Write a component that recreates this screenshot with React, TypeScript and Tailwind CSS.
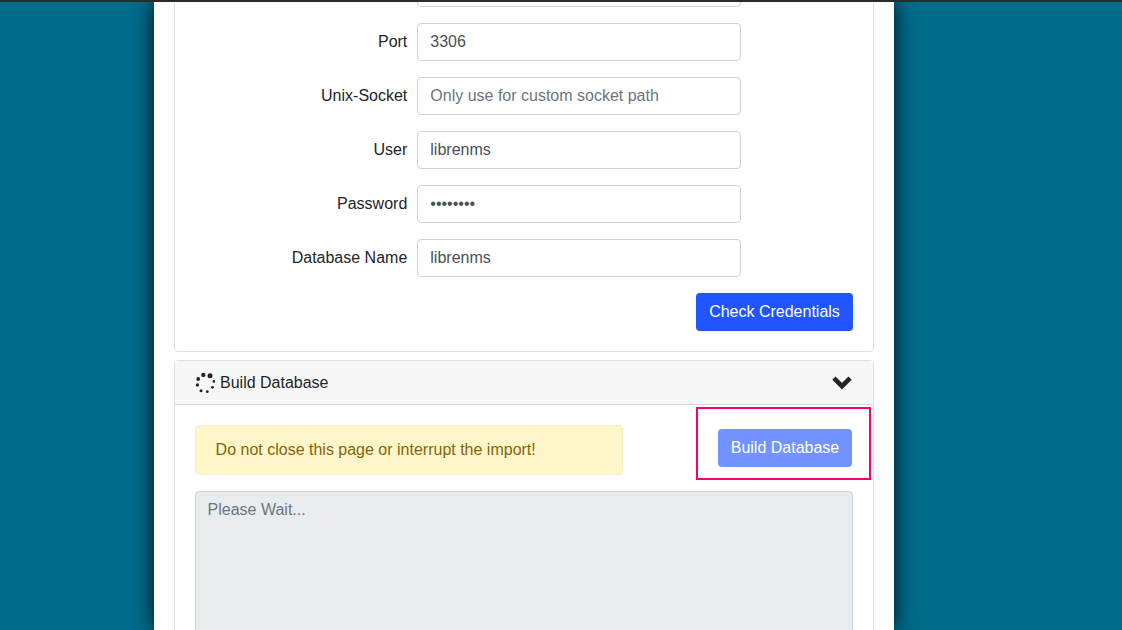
import React from 'react';

const fields = [
  { label: '', value: '' },
  { label: 'Port', value: '3306' },
  { label: 'Unix-Socket', placeholder: 'Only use for custom socket path' },
  { label: 'User', value: 'librenms' },
  { label: 'Password', value: '••••••••', type: 'password' },
  { label: 'Database Name', value: 'librenms' },
];

function Spinner() {
  // fa-spinner style ring of dots, largest at the top right
  const dots = [
    [15, 3.7, 2.5], [8.3, 2.9, 2.2], [3.2, 7, 1.9], [2.4, 13, 1.7],
    [6, 18.7, 1.5], [12.3, 19.7, 1.4], [17.5, 15.3, 1.4], [19, 9.4, 1.4],
  ];
  return (
    <svg width="20" height="22" viewBox="0 0 20 22" className="shrink-0 text-[#212529]">
      {dots.map(([cx, cy, r], i) => (
        <circle key={i} cx={cx} cy={cy} r={r} fill="currentColor" />
      ))}
    </svg>
  );
}

function Chevron() {
  return (
    <svg width="20" height="14" viewBox="0 0 20 14" className="text-[#212529]">
      <polyline points="1.9,2.2 10,10.2 18.1,2.2" fill="none" stroke="currentColor" strokeWidth="4.6" />
    </svg>
  );
}

export default function App() {
  return (
    <div className="h-[630px] overflow-hidden border-t-2 border-[#2b2b2b] bg-[#006c8b] font-['Liberation_Sans',Arial,sans-serif] text-base text-[#212529]">
      <div className="ml-[154px] h-full w-[740px] overflow-hidden bg-white px-5 shadow-[0_0_20px_rgba(0,0,0,0.9)]">
        {/* Database credentials card, scrolled past its top */}
        <div className="-mt-[85px] flex h-[435px] flex-col justify-end rounded border border-[rgba(0,0,0,0.125)] p-5">
          <div className="flex flex-col gap-4">
            {fields.map((f, i) => (
              <div key={i} className="flex items-center">
                <label className="w-[222.3px] pr-[10px] text-right">{f.label}</label>
                <input
                  readOnly
                  type={f.type ?? 'text'}
                  value={f.value ?? ''}
                  placeholder={f.placeholder}
                  className="h-[38px] w-[324px] rounded border border-[#ced4da] bg-white px-3 text-[#495057] placeholder:text-[#6c757d] outline-none"
                />
              </div>
            ))}
            <div className="flex justify-end">
              <button className="h-[38px] w-[157px] rounded bg-[#2055ff] text-white">Check Credentials</button>
            </div>
          </div>
        </div>

        {/* Build Database card */}
        <div className="mt-2 rounded border border-[rgba(0,0,0,0.125)]">
          <div className="flex h-[44px] items-center justify-between border-b border-[rgba(0,0,0,0.125)] bg-[#f7f7f7] pl-5 pr-[21px]">
            <div className="flex items-center gap-[5px]">
              <Spinner />
              <span>Build Database</span>
            </div>
            <Chevron />
          </div>
          <div className="px-5 pt-5">
            <div className="relative flex items-start justify-between">
              <div className="h-[50px] w-[428px] rounded border border-[#fdeeba] bg-[#fff6cc] px-[19.6px] py-3 text-[#856404]">
                Do not close this page or interrupt the import!
              </div>
              <button className="mt-1 mr-px h-[38px] w-[134px] rounded bg-[#7293ff] text-white">Build Database</button>
              <div className="absolute -top-[18px] -right-[18px] h-[73px] w-[175px] border-2 border-[#f80070]" />
            </div>
            <textarea
              readOnly
              placeholder="Please Wait..."
              className="mt-4 block h-[200px] w-full resize-none rounded border border-[#ced4da] bg-[#e9ecef] py-[6px] pr-3 pl-[11.6px] placeholder:text-[#6c757d] outline-none"
            />
          </div>
        </div>
      </div>
    </div>
  );
}
